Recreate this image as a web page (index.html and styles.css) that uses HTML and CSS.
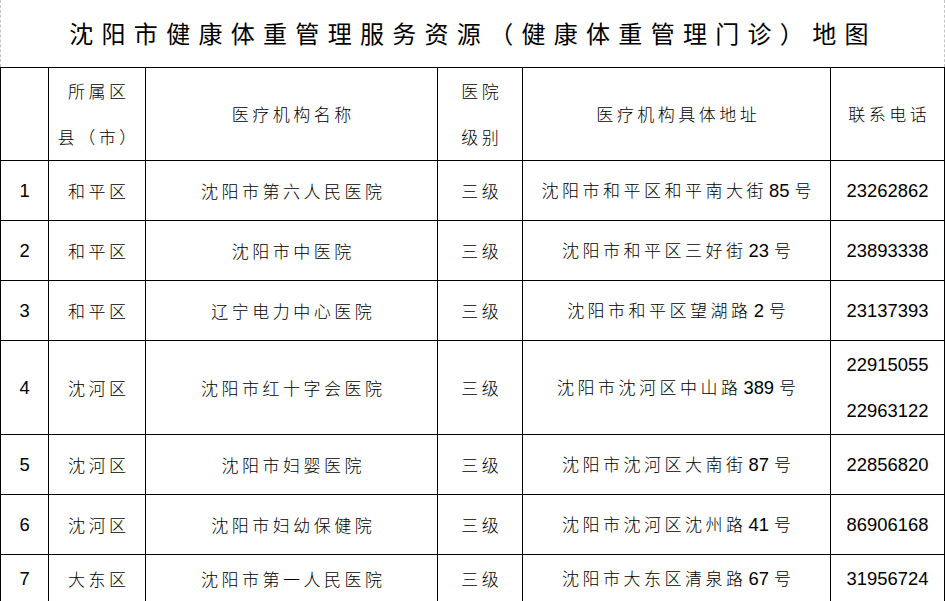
FILE: index.html
```html
<!DOCTYPE html>
<html lang="zh-CN">
<head>
<meta charset="utf-8">
<title>沈阳市健康体重管理服务资源（健康体重管理门诊）地图</title>
<link rel="stylesheet" href="styles.css">
</head>
<body>
<div class="page">
  <header class="title-bar">
    <h1 class="title">沈阳市健康体重管理服务资源（健康体重管理门诊）地图</h1>
  </header>
  <table class="grid">
    <colgroup>
      <col class="c-no">
      <col class="c-area">
      <col class="c-name">
      <col class="c-level">
      <col class="c-addr">
      <col class="c-tel">
    </colgroup>
    <thead>
      <tr class="r-head">
        <th></th>
        <th class="cj">所属区<br>县（市）</th>
        <th class="cj">医疗机构名称</th>
        <th class="cj">医院<br>级别</th>
        <th class="cj">医疗机构具体地址</th>
        <th class="cj">联系电话</th>
      </tr>
    </thead>
    <tbody>
      <tr class="r-std">
        <td class="num">1</td>
        <td class="cj">和平区</td>
        <td class="cj">沈阳市第六人民医院</td>
        <td class="cj">三级</td>
        <td class="cj">沈阳市和平区和平南大街<span class="n">85</span>号</td>
        <td class="num">23262862</td>
      </tr>
      <tr class="r-std">
        <td class="num">2</td>
        <td class="cj">和平区</td>
        <td class="cj">沈阳市中医院</td>
        <td class="cj">三级</td>
        <td class="cj">沈阳市和平区三好街<span class="n">23</span>号</td>
        <td class="num">23893338</td>
      </tr>
      <tr class="r-std">
        <td class="num">3</td>
        <td class="cj">和平区</td>
        <td class="cj">辽宁电力中心医院</td>
        <td class="cj">三级</td>
        <td class="cj">沈阳市和平区望湖路<span class="n">2</span>号</td>
        <td class="num">23137393</td>
      </tr>
      <tr class="r-tall">
        <td class="num">4</td>
        <td class="cj">沈河区</td>
        <td class="cj">沈阳市红十字会医院</td>
        <td class="cj">三级</td>
        <td class="cj">沈阳市沈河区中山路<span class="n">389</span>号</td>
        <td class="num">22915055<br>22963122</td>
      </tr>
      <tr class="r-std">
        <td class="num">5</td>
        <td class="cj">沈河区</td>
        <td class="cj">沈阳市妇婴医院</td>
        <td class="cj">三级</td>
        <td class="cj">沈阳市沈河区大南街<span class="n">87</span>号</td>
        <td class="num">22856820</td>
      </tr>
      <tr class="r-std">
        <td class="num">6</td>
        <td class="cj">沈河区</td>
        <td class="cj">沈阳市妇幼保健院</td>
        <td class="cj">三级</td>
        <td class="cj">沈阳市沈河区沈州路<span class="n">41</span>号</td>
        <td class="num">86906168</td>
      </tr>
      <tr class="r-last">
        <td class="num">7</td>
        <td class="cj">大东区</td>
        <td class="cj">沈阳市第一人民医院</td>
        <td class="cj">三级</td>
        <td class="cj">沈阳市大东区清泉路<span class="n">67</span>号</td>
        <td class="num">31956724</td>
      </tr>
    </tbody>
  </table>
</div>
</body>
</html>
```

FILE: styles.css
```css
html, body {
  margin: 0;
  padding: 0;
  background: #ffffff;
}

body {
  font-family: "Liberation Sans", "Noto Sans CJK SC", sans-serif;
  color: #000000;
}

.page {
  width: 945px;
  overflow: hidden;
}

.title-bar {
  height: 67px;
  box-sizing: border-box;
  border-left: 1px dashed #c4c4c4;
  border-right: 1px dashed #c4c4c4;
  display: flex;
  align-items: center;
  justify-content: center;
}

.title {
  margin: 0;
  padding: 0 4px 2px 5px;
  font-family: "Noto Sans CJK SC", sans-serif;
  font-weight: 400;
  font-size: 24px;
  letter-spacing: 8.3px;
  line-height: 30px;
  white-space: nowrap;
}

.grid {
  width: 944px;
  border-collapse: collapse;
  table-layout: fixed;
}

.c-no { width: 48px; }
.c-area { width: 97px; }
.c-name { width: 292px; }
.c-level { width: 85px; }
.c-addr { width: 308px; }
.c-tel { width: 114px; }

.grid th,
.grid td {
  border: 1px solid #000000;
  padding: 0;
  text-align: center;
  vertical-align: middle;
  font-weight: 400;
  line-height: 46px;
  white-space: nowrap;
}

.r-head { height: 93px; }
.r-std { height: 60px; }
.r-tall { height: 94px; }
.r-last { height: 46px; }

.grid .cj {
  font-family: "Noto Sans CJK SC", sans-serif;
  font-weight: 300;
  font-size: 17px;
  letter-spacing: 3.5px;
  padding-left: 3.5px;
}

.num {
  font-family: "Liberation Sans", sans-serif;
  font-size: 18.4px;
}

.n {
  font-family: "Liberation Sans", sans-serif;
  font-weight: 400;
  font-size: 18.4px;
  letter-spacing: 0;
  margin: 0 5px 0 2px;
}
```
